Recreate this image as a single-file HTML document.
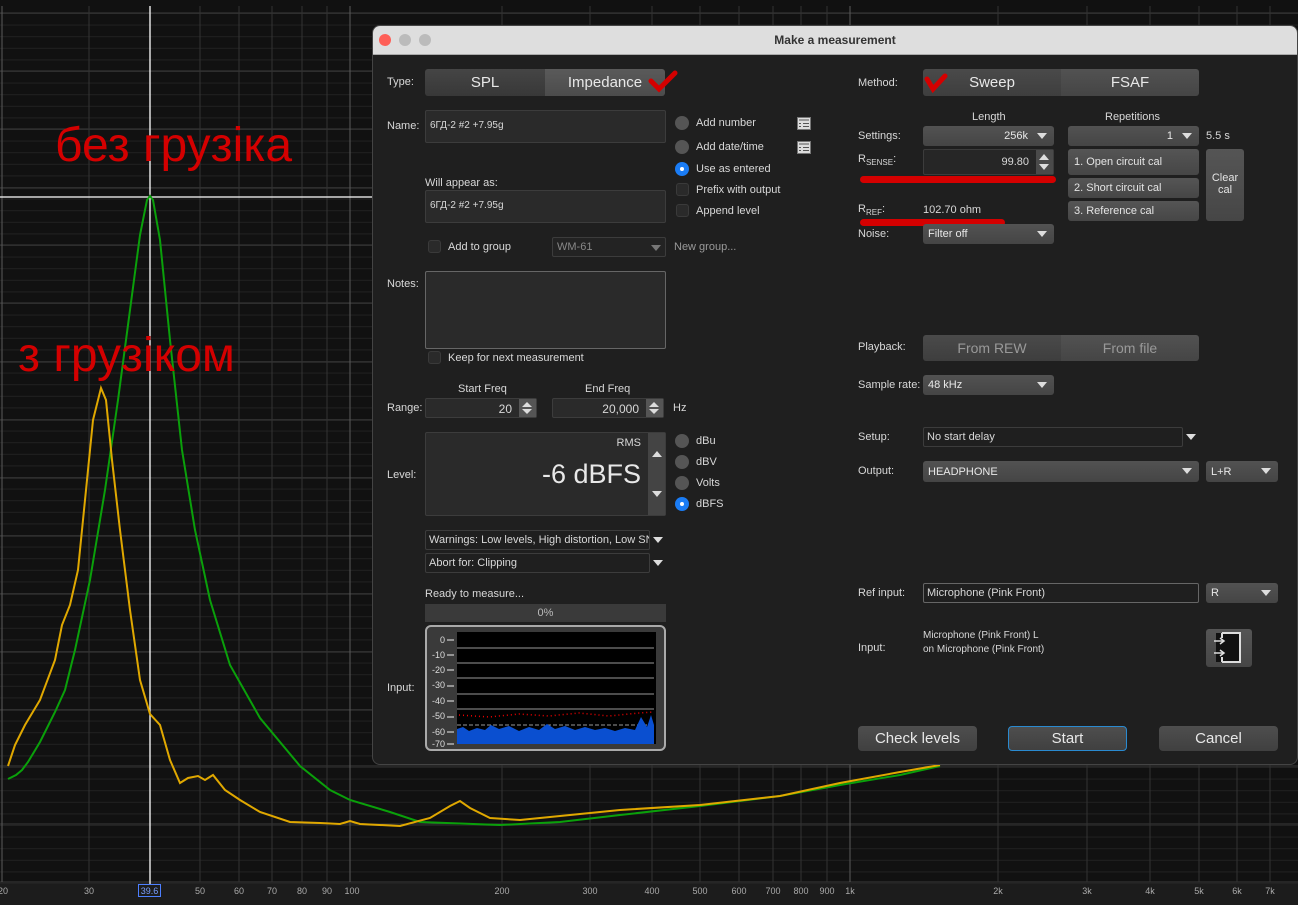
<!DOCTYPE html>
<html><head><meta charset="utf-8"><style>
*{box-sizing:border-box;margin:0;padding:0}
body{width:1298px;height:905px;overflow:hidden;background:#111;font-family:"Liberation Sans",Arial,sans-serif;position:relative;color:#ddd}
.a{position:absolute}
.t{position:absolute;font-size:11px;color:#d8d8d8;white-space:nowrap}
#dlg{position:absolute;left:372px;top:25px;width:926px;height:740px;background:#1f1f1f;border-radius:8px;overflow:hidden;border:1px solid #444}
#tb{position:absolute;left:0;top:0;width:100%;height:29px;background:#dedede;border-bottom:1px solid #aaa}
.box{position:absolute;background:#2a2a2a;border:1px solid #3c3c3c;border-radius:2px}
.btn{position:absolute;background:linear-gradient(#555,#464646);border-radius:3px;color:#e4e4e4;font-size:11px}
.seg{position:absolute;border-radius:3px;overflow:hidden;display:flex;font-size:15px;color:#e8e8e8}
.seg div{flex:1;display:flex;align-items:center;justify-content:center}
.dd{position:absolute;background:linear-gradient(#525252,#454545);border-radius:3px;font-size:11px;color:#e8e8e8;padding:0 5px;display:flex;align-items:center}
.arr{position:absolute;width:0;height:0;border-left:5px solid transparent;border-right:5px solid transparent;border-top:6px solid #ddd}
.up{position:absolute;width:0;height:0;border-left:5px solid transparent;border-right:5px solid transparent;border-bottom:6px solid #ddd}
.rad{position:absolute;width:14px;height:14px;border-radius:50%;background:#555}
.chk{position:absolute;width:13px;height:13px;border-radius:3px;background:#2a2a2a;border:1px solid #3a3a3a}
.bb{position:absolute;background:linear-gradient(#4e4e4e,#404040);border-radius:4px;color:#e8e8e8;font-size:15px;display:flex;align-items:center;justify-content:center}
</style></head><body>
<svg class="a" style="left:0;top:0" width="1298" height="905">
<defs><pattern id="mh" width="1298" height="11.6" patternUnits="userSpaceOnUse" y="13"><line x1="0" y1="0.5" x2="1298" y2="0.5" stroke="#222" stroke-width="1"/></pattern></defs>
<rect width="1298" height="884" fill="#111"/>
<rect x="0" y="6" width="1298" height="878" fill="url(#mh)"/>
<g stroke="#3a3a3a" stroke-width="1">
<line x1="0" y1="13" x2="1298" y2="13"/><line x1="0" y1="71" x2="1298" y2="71"/><line x1="0" y1="129" x2="1298" y2="129"/><line x1="0" y1="188" x2="1298" y2="188"/><line x1="0" y1="245" x2="1298" y2="245"/><line x1="0" y1="303" x2="1298" y2="303"/><line x1="0" y1="362" x2="1298" y2="362"/><line x1="0" y1="420" x2="1298" y2="420"/><line x1="0" y1="478" x2="1298" y2="478"/><line x1="0" y1="536" x2="1298" y2="536"/><line x1="0" y1="594" x2="1298" y2="594"/><line x1="0" y1="652" x2="1298" y2="652"/><line x1="0" y1="710" x2="1298" y2="710"/><line x1="0" y1="766" x2="1298" y2="766"/><line x1="0" y1="824" x2="1298" y2="824"/><line x1="0" y1="882" x2="1298" y2="882"/>
</g>
<g stroke="#333" stroke-width="1">
<line x1="89" y1="6" x2="89" y2="882"/><line x1="200" y1="6" x2="200" y2="882"/><line x1="239" y1="6" x2="239" y2="882"/><line x1="272" y1="6" x2="272" y2="882"/><line x1="302" y1="6" x2="302" y2="882"/><line x1="327" y1="6" x2="327" y2="882"/><line x1="502" y1="6" x2="502" y2="882"/><line x1="590" y1="6" x2="590" y2="882"/><line x1="652" y1="6" x2="652" y2="882"/><line x1="700" y1="6" x2="700" y2="882"/><line x1="739" y1="6" x2="739" y2="882"/><line x1="773" y1="6" x2="773" y2="882"/><line x1="801" y1="6" x2="801" y2="882"/><line x1="827" y1="6" x2="827" y2="882"/><line x1="998" y1="6" x2="998" y2="882"/><line x1="1087" y1="6" x2="1087" y2="882"/><line x1="1150" y1="6" x2="1150" y2="882"/><line x1="1199" y1="6" x2="1199" y2="882"/><line x1="1237" y1="6" x2="1237" y2="882"/><line x1="1270" y1="6" x2="1270" y2="882"/>
</g>
<g stroke="#5a5a5a"><line x1="2" y1="6" x2="2" y2="882"/><line x1="350" y1="6" x2="350" y2="882"/><line x1="850" y1="6" x2="850" y2="882"/></g>
<line x1="150" y1="6" x2="150" y2="884" stroke="#fff" stroke-width="1.3"/>
<line x1="0" y1="197" x2="372" y2="197" stroke="#fff" stroke-width="1.3"/>
<path d="M8,779 L16,775 L22,770 L28,762 L40,742 L55,712 L65,690 L75,650 L90,580 L105,490 L118,400 L130,310 L140,235 L147,200 L150,196 L153,200 L160,240 L170,340 L182,450 L195,530 L210,600 L230,665 L260,718 L300,766 L330,790 L350,800 L390,812 L420,822 L500,825 L560,822 L620,815 L700,806 L780,796 L840,785 L900,775 L940,766" fill="none" stroke="#0aa00a" stroke-width="2"/>
<path d="M8,766 L15,745 L25,725 L40,700 L55,660 L62,625 L70,605 L78,570 L86,490 L93,420 L101,388 L106,400 L112,460 L120,530 L130,610 L140,680 L150,714 L160,725 L170,760 L180,783 L188,778 L198,776 L205,780 L213,775 L225,790 L240,800 L260,812 L290,822 L320,823 L340,824 L350,821 L360,824 L400,826 L430,818 L450,806 L460,801 L470,808 L490,818 L520,820 L560,816 L620,810 L700,805 L780,796 L840,783 L900,772 L940,765" fill="none" stroke="#e0a800" stroke-width="2"/>
<rect x="0" y="884" width="1298" height="21" fill="#1c1c1c"/>
<g fill="#aaa" font-family="Liberation Sans" font-size="9" text-anchor="middle">
<text x="3" y="894">20</text><text x="89" y="894">30</text><text x="200" y="894">50</text><text x="239" y="894">60</text><text x="272" y="894">70</text><text x="302" y="894">80</text><text x="327" y="894">90</text><text x="352" y="894">100</text><text x="502" y="894">200</text><text x="590" y="894">300</text><text x="652" y="894">400</text><text x="700" y="894">500</text><text x="739" y="894">600</text><text x="773" y="894">700</text><text x="801" y="894">800</text><text x="827" y="894">900</text><text x="850" y="894">1k</text><text x="998" y="894">2k</text><text x="1087" y="894">3k</text><text x="1150" y="894">4k</text><text x="1199" y="894">5k</text><text x="1237" y="894">6k</text><text x="1270" y="894">7k</text>
</g>
<rect x="138.5" y="884.5" width="22" height="12" fill="none" stroke="#4d7fff"/>
<text x="149.5" y="894" fill="#7a9fff" font-family="Liberation Sans" font-size="9" text-anchor="middle">39.6</text>
<text x="55" y="161" fill="#d40000" font-family="Liberation Sans" font-size="48">без грузіка</text>
<text x="18" y="371" fill="#d40000" font-family="Liberation Sans" font-size="48">з грузіком</text>
</svg>

<div id="dlg">
<div id="tb">
<div class="a" style="left:6px;top:8px;width:12px;height:12px;border-radius:50%;background:#fe5f57"></div>
<div class="a" style="left:26px;top:8px;width:12px;height:12px;border-radius:50%;background:#bbb"></div>
<div class="a" style="left:46px;top:8px;width:12px;height:12px;border-radius:50%;background:#bbb"></div>
<div class="a" style="left:0;width:100%;top:7px;text-align:center;font-size:12px;font-weight:bold;color:#333">Make a measurement</div>
</div>
<div class="t" style="left:14px;top:50px">Type:</div>
<div class="seg" style="left:52px;top:43px;width:240px;height:27px"><div style="background:linear-gradient(#454545,#383838)">SPL</div><div style="background:linear-gradient(#5a5a5a,#4c4c4c)">Impedance</div></div>
<svg class="a" style="left:275px;top:43px" width="32" height="24"><path d="M3,12 L11,20 L27,4" fill="none" stroke="#d40000" stroke-width="5" stroke-linecap="round"/></svg>
<div class="t" style="left:14px;top:94px">Name:</div>
<div class="box" style="left:52px;top:84px;width:241px;height:33px"><div class="t" style="left:4px;top:9px;font-size:10px">6ГД-2 #2 +7.95g</div></div>
<div class="rad" style="left:302px;top:90px"></div><div class="t" style="left:323px;top:91px">Add number</div>
<div class="rad" style="left:302px;top:114px"></div><div class="t" style="left:323px;top:115px">Add date/time</div>
<div class="rad" style="left:302px;top:136px;background:#1a7cf5"><div class="a" style="left:5px;top:5px;width:4px;height:4px;border-radius:50%;background:#fff"></div></div><div class="t" style="left:323px;top:137px">Use as entered</div>
<div class="chk" style="left:303px;top:157px"></div><div class="t" style="left:323px;top:158px">Prefix with output</div>
<div class="chk" style="left:303px;top:178px"></div><div class="t" style="left:323px;top:179px">Append level</div>
<svg class="a" style="left:424px;top:91px" width="14" height="13"><rect x="0.5" y="0.5" width="13" height="12" fill="#ddd" stroke="#777"/><path d="M2,3 H12 M2,6.5 H4 M6,6.5 H12 M2,9.5 H4 M6,9.5 H12" stroke="#555"/></svg>
<svg class="a" style="left:424px;top:115px" width="14" height="13"><rect x="0.5" y="0.5" width="13" height="12" fill="#ddd" stroke="#777"/><path d="M2,3 H12 M2,6.5 H4 M6,6.5 H12 M2,9.5 H4 M6,9.5 H12" stroke="#555"/></svg>
<div class="t" style="left:52px;top:151px">Will appear as:</div>
<div class="box" style="left:52px;top:164px;width:241px;height:33px"><div class="t" style="left:4px;top:9px;font-size:10px">6ГД-2 #2 +7.95g</div></div>
<div class="chk" style="left:55px;top:214px"></div><div class="t" style="left:75px;top:215px">Add to group</div>
<div class="box" style="left:179px;top:211px;width:114px;height:20px;background:#232323"><div class="t" style="left:4px;top:3px;color:#888">WM-61</div><div class="arr" style="left:98px;top:7px;border-top-color:#777"></div></div>
<div class="t" style="left:301px;top:215px;color:#999">New group...</div>
<div class="t" style="left:14px;top:252px">Notes:</div>
<div class="box" style="left:52px;top:245px;width:241px;height:78px;border-color:#666"></div>
<div class="chk" style="left:55px;top:325px"></div><div class="t" style="left:75px;top:326px">Keep for next measurement</div>
<div class="t" style="left:85px;top:357px">Start Freq</div><div class="t" style="left:212px;top:357px">End Freq</div>
<div class="t" style="left:14px;top:376px">Range:</div>
<div class="box" style="left:52px;top:372px;width:112px;height:20px"><div class="t" style="right:24px;top:3px;font-size:12px">20</div><div class="a" style="right:0;top:0;width:17px;height:18px;background:#555"><div class="up" style="left:3px;top:3px;border-width:0 5px 5px"></div><div class="arr" style="left:3px;top:10px;border-width:5px 5px 0"></div></div></div>
<div class="box" style="left:179px;top:372px;width:112px;height:20px"><div class="t" style="right:24px;top:3px;font-size:12px">20,000</div><div class="a" style="right:0;top:0;width:17px;height:18px;background:#555"><div class="up" style="left:3px;top:3px;border-width:0 5px 5px"></div><div class="arr" style="left:3px;top:10px;border-width:5px 5px 0"></div></div></div>
<div class="t" style="left:300px;top:376px">Hz</div>
<div class="t" style="left:14px;top:443px">Level:</div>
<div class="box" style="left:52px;top:406px;width:241px;height:84px"><div class="t" style="right:24px;top:4px">RMS</div><div class="t" style="right:24px;top:26px;font-size:27px;color:#e8e8e8">-6 dBFS</div><div class="a" style="right:0;top:0;width:17px;height:82px;background:#444"><div class="up" style="left:4px;top:18px;border-width:0 5px 6px"></div><div class="arr" style="left:4px;top:58px"></div></div></div>
<div class="rad" style="left:302px;top:408px"></div><div class="t" style="left:323px;top:409px">dBu</div>
<div class="rad" style="left:302px;top:429px"></div><div class="t" style="left:323px;top:430px">dBV</div>
<div class="rad" style="left:302px;top:450px"></div><div class="t" style="left:323px;top:451px">Volts</div>
<div class="rad" style="left:302px;top:471px;background:#1a7cf5"><div class="a" style="left:5px;top:5px;width:4px;height:4px;border-radius:50%;background:#fff"></div></div><div class="t" style="left:323px;top:472px">dBFS</div>
<div class="box" style="left:52px;top:504px;width:225px;height:20px;background:#1f1f1f;overflow:hidden"><div class="t" style="left:3px;top:3px">Warnings: Low levels, High distortion, Low SNR</div></div><div class="arr" style="left:280px;top:511px"></div>
<div class="box" style="left:52px;top:527px;width:225px;height:20px;background:#1f1f1f"><div class="t" style="left:3px;top:3px">Abort for: Clipping</div></div><div class="arr" style="left:280px;top:534px"></div>
<div class="t" style="left:52px;top:562px">Ready to measure...</div>
<div class="a" style="left:52px;top:578px;width:241px;height:18px;background:#3a3a3a"><div class="t" style="left:0;width:100%;text-align:center;top:3px;color:#bbb">0%</div></div>
<div class="a" style="left:52px;top:599px;width:241px;height:126px;border:2px solid #aaa;border-radius:6px;background:#3a3a3a"></div>
<svg class="a" style="left:56px;top:603px" width="234" height="118" font-family="Liberation Sans" font-size="9" fill="#ddd">
<rect x="28" y="3" width="199" height="112" fill="#000"/>
<g stroke="#999"><line x1="28" y1="19" x2="225" y2="19"/><line x1="28" y1="34" x2="225" y2="34"/><line x1="28" y1="49" x2="225" y2="49"/><line x1="28" y1="65" x2="225" y2="65"/><line x1="28" y1="80" x2="225" y2="80"/></g>
<line x1="28" y1="96" x2="225" y2="96" stroke="#999" stroke-dasharray="4,2"/>
<g text-anchor="end"><text x="16" y="14">0</text><text x="16" y="29">-10</text><text x="16" y="44">-20</text><text x="16" y="59">-30</text><text x="16" y="75">-40</text><text x="16" y="90">-50</text><text x="16" y="106">-60</text><text x="16" y="118">-70</text></g>
<g stroke="#eee"><line x1="18" y1="11" x2="25" y2="11"/><line x1="18" y1="26" x2="25" y2="26"/><line x1="18" y1="41" x2="25" y2="41"/><line x1="18" y1="57" x2="25" y2="57"/><line x1="18" y1="72" x2="25" y2="72"/><line x1="18" y1="88" x2="25" y2="88"/><line x1="18" y1="103" x2="25" y2="103"/><line x1="18" y1="115" x2="25" y2="115"/></g>
<path d="M28,115 L28,100 L34,98 L40,102 L48,99 L56,101 L62,96 L70,100 L80,97 L90,102 L100,98 L110,101 L118,95 L126,100 L136,97 L146,101 L156,98 L166,101 L176,99 L186,102 L196,99 L206,101 L212,88 L218,98 L222,86 L225,96 L225,115 Z" fill="#0a4fd0"/>
<path d="M30,86 L60,88 L90,85 L120,87 L150,84 L180,87 L210,84 L225,83" fill="none" stroke="#e00" stroke-width="1.5" stroke-dasharray="1,3"/>
</svg>
<div class="t" style="left:14px;top:656px">Input:</div>

<div class="t" style="left:485px;top:51px">Method:</div>
<div class="seg" style="left:550px;top:43px;width:276px;height:27px"><div style="background:linear-gradient(#4a4a4a,#3e3e3e)">Sweep</div><div style="background:linear-gradient(#525252,#454545)">FSAF</div></div>
<svg class="a" style="left:550px;top:45px" width="26" height="22"><path d="M4,8 L10,18 L22,5" fill="none" stroke="#d40000" stroke-width="5" stroke-linecap="round"/></svg>
<div class="t" style="left:599px;top:85px">Length</div><div class="t" style="left:732px;top:85px">Repetitions</div>
<div class="t" style="left:485px;top:104px">Settings:</div>
<div class="dd" style="left:550px;top:100px;width:131px;height:20px;justify-content:flex-end;padding-right:26px">256k</div><div class="arr" style="left:664px;top:107px"></div>
<div class="dd" style="left:695px;top:100px;width:131px;height:20px;justify-content:flex-end;padding-right:26px">1</div><div class="arr" style="left:809px;top:107px"></div>
<div class="t" style="left:833px;top:104px">5.5 s</div>
<div class="t" style="left:485px;top:127px">R<sub style="font-size:8px">SENSE</sub>:</div>
<div class="box" style="left:550px;top:123px;width:131px;height:26px;background:#262626"><div class="t" style="right:24px;top:6px">99.80</div><div class="a" style="right:0;top:0;width:17px;height:24px;background:#4a4a4a"><div class="up" style="left:3px;top:4px;border-width:0 5px 6px"></div><div class="arr" style="left:3px;top:14px"></div></div></div>
<div class="a" style="left:487px;top:150px;width:196px;height:7px;border-radius:4px;background:#d40000"></div>
<div class="btn" style="left:695px;top:123px;width:131px;height:26px;padding:7px 6px">1. Open circuit cal</div>
<div class="btn" style="left:695px;top:152px;width:131px;height:20px;padding:4px 6px">2. Short circuit cal</div>
<div class="btn" style="left:695px;top:175px;width:131px;height:20px;padding:4px 6px">3. Reference cal</div>
<div class="btn" style="left:833px;top:123px;width:38px;height:72px;text-align:center;padding-top:23px">Clear<br>cal</div>
<div class="t" style="left:485px;top:177px">R<sub style="font-size:8px">REF</sub>:</div>
<div class="t" style="left:550px;top:178px">102.70 ohm</div>
<div class="a" style="left:487px;top:193px;width:145px;height:7px;border-radius:4px;background:#d40000"></div>
<div class="t" style="left:485px;top:202px">Noise:</div>
<div class="dd" style="left:550px;top:198px;width:131px;height:20px">Filter off</div><div class="arr" style="left:664px;top:205px"></div>
<div class="t" style="left:485px;top:315px">Playback:</div>
<div class="seg" style="left:550px;top:309px;width:276px;height:26px;color:#999;font-size:14px"><div style="background:linear-gradient(#4a4a4a,#3e3e3e)">From REW</div><div style="background:linear-gradient(#525252,#454545)">From file</div></div>
<div class="t" style="left:485px;top:353px">Sample rate:</div>
<div class="dd" style="left:550px;top:349px;width:131px;height:20px">48 kHz</div><div class="arr" style="left:664px;top:356px"></div>
<div class="t" style="left:485px;top:405px">Setup:</div>
<div class="box" style="left:550px;top:401px;width:260px;height:20px;background:#1f1f1f"><div class="t" style="left:3px;top:3px">No start delay</div></div><div class="arr" style="left:813px;top:408px"></div>
<div class="t" style="left:485px;top:439px">Output:</div>
<div class="dd" style="left:550px;top:435px;width:276px;height:21px">HEADPHONE</div><div class="arr" style="left:809px;top:442px"></div>
<div class="dd" style="left:833px;top:435px;width:72px;height:21px">L+R</div><div class="arr" style="left:888px;top:442px"></div>
<div class="t" style="left:485px;top:561px">Ref input:</div>
<div class="box" style="left:550px;top:557px;width:276px;height:20px;background:#1f1f1f;border-color:#666"><div class="t" style="left:3px;top:3px">Microphone (Pink Front)</div></div>
<div class="dd" style="left:833px;top:557px;width:72px;height:20px">R</div><div class="arr" style="left:888px;top:564px"></div>
<div class="t" style="left:485px;top:616px">Input:</div>
<div class="t" style="left:550px;top:604px;font-size:10px">Microphone (Pink Front) L</div>
<div class="t" style="left:550px;top:618px;font-size:10px">on Microphone (Pink Front)</div>
<div class="btn" style="left:833px;top:603px;width:46px;height:38px"></div>
<svg class="a" style="left:833px;top:603px" width="46" height="38"><rect x="10" y="4" width="24" height="29" fill="#111"/><path d="M16,4 H34 V33 H16 M16,4 V9 M16,28 V33" fill="none" stroke="#ddd" stroke-width="2"/><path d="M8,12 H18 M14,9 L18,12 L14,15 M8,24 H18 M14,21 L18,24 L14,27" fill="none" stroke="#ddd" stroke-width="1.5"/></svg>
<div class="bb" style="left:485px;top:700px;width:119px;height:25px">Check levels</div>
<div class="bb" style="left:635px;top:700px;width:119px;height:25px;border:1px solid #2a8ad0">Start</div>
<div class="bb" style="left:786px;top:700px;width:119px;height:25px">Cancel</div>
</div>
</body></html>
